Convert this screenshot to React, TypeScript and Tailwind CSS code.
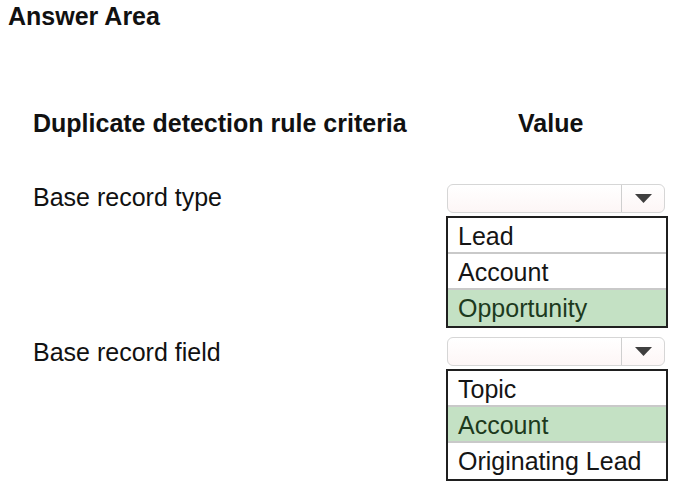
import React from 'react';

interface Option {
  label: string;
  selected?: boolean;
}

const Dropdown: React.FC = () => (
  <div className="ml-[1px] flex h-[29px] w-[218px] rounded-[6px] border border-[#d6d6d6] bg-gradient-to-b from-white to-[#fdf6f6]">
    <div className="flex-1 border-r border-[#cfcfcf]" />
    <div className="flex w-[42px] items-center justify-center">
      <svg width="17" height="9" viewBox="0 0 17 9">
        <polygon points="0,0 17,0 8.5,9" fill="#3f3f3f" />
      </svg>
    </div>
  </div>
);

const ListBox: React.FC<{ options: Option[] }> = ({ options }) => (
  <div className="mt-[3px] w-[222px] border-2 border-[#1f1f1f] bg-white">
    {options.map((opt, i) => (
      <div
        key={opt.label}
        className={`h-[36px] pl-[10px] text-[25px] leading-[37px] ${
          i < options.length - 1 ? 'border-b-2 border-[#c9c9c9]' : ''
        } ${opt.selected ? 'bg-[#c4e1c4] text-[#1d3a1d]' : 'text-[#151515]'}`}
      >
        {opt.label}
      </div>
    ))}
  </div>
);

export default function App() {
  return (
    <div
      className="h-[497px] w-[700px] overflow-hidden bg-white text-[#111]"
      style={{ fontFamily: '"Liberation Sans", Arial, sans-serif' }}
    >
      <p className="ml-[8px] mt-[4px] text-[25px] font-bold leading-[25px]">Answer Area</p>

      {/* Header */}
      <div className="mt-[82px] flex text-[25px] font-bold leading-[25px]">
        <div className="w-[446px] pl-[33px]">Duplicate detection rule criteria</div>
        <div className="pl-[72px]">Value</div>
      </div>

      {/* Base record type */}
      <div className="mt-[48px] flex">
        <div className="w-[446px] pl-[33px] pt-[1px] text-[25px] leading-[25px]">Base record type</div>
        <div>
          <Dropdown />
          <ListBox options={[{ label: 'Lead' }, { label: 'Account' }, { label: 'Opportunity', selected: true }]} />
        </div>
      </div>

      {/* Base record field */}
      <div className="mt-[9px] flex">
        <div className="w-[446px] pl-[33px] pt-[3px] text-[25px] leading-[25px]">Base record field</div>
        <div>
          <Dropdown />
          <ListBox options={[{ label: 'Topic' }, { label: 'Account', selected: true }, { label: 'Originating Lead' }]} />
        </div>
      </div>
    </div>
  );
}
